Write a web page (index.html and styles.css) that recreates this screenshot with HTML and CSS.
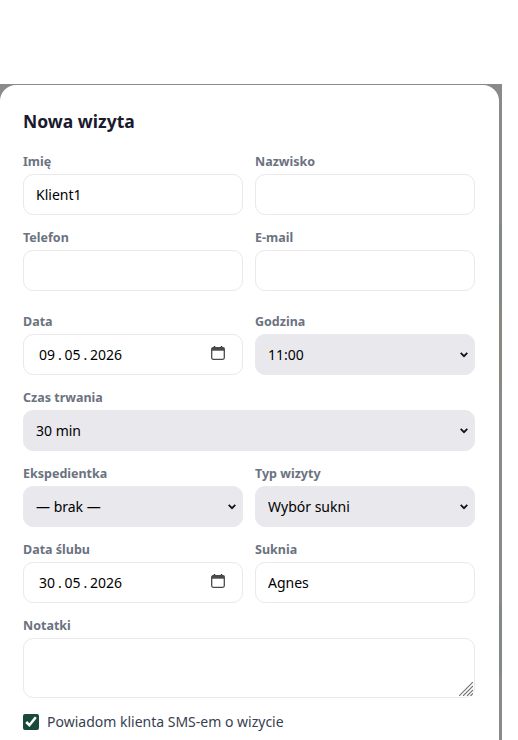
FILE: index.html
```html
<!DOCTYPE html>
<html lang="pl">
<head>
    <meta charset="UTF-8">
    <meta name="viewport" content="width=device-width, initial-scale=1.0">
    <title>Nowa wizyta</title>
    <link rel="stylesheet" href="styles.css">
</head>
<body>
    <div class="overlay">
        <form class="modal">
            <h2 class="modal-title">Nowa wizyta</h2>
            <div class="row">
                <div class="field">
                    <label>Imię</label>
                    <input type="text" value="Klient1">
                </div>
                <div class="field">
                    <label>Nazwisko</label>
                    <input type="text">
                </div>
            </div>
            <div class="row row-contact">
                <div class="field">
                    <label>Telefon</label>
                    <input type="tel">
                </div>
                <div class="field">
                    <label>E-mail</label>
                    <input type="email">
                </div>
            </div>
            <div class="row">
                <div class="field">
                    <label>Data</label>
                    <div class="date-box">
                        <input type="text" class="date-input" value="09 . 05 . 2026">
                        <svg class="date-icon" width="14" height="14" viewBox="0 0 14 14"><path d="M3.5 0v3M10.500 0v3" stroke="#3a3a3a" stroke-width="1.500" fill="none"/><rect x="0.700" y="1.700" width="12.600" height="11.600" rx="1.500" fill="none" stroke="#4a4a4a" stroke-width="1.300"/><rect x="0.700" y="1.700" width="12.600" height="3" fill="#4a4a4a"/></svg>
                    </div>
                </div>
                <div class="field">
                    <label>Godzina</label>
                    <select><option>11:00</option><option>11:30</option></select>
                </div>
            </div>
            <div class="row">
                <div class="field field-wide">
                    <label>Czas trwania</label>
                    <select><option>30 min</option><option>60 min</option></select>
                </div>
            </div>
            <div class="row">
                <div class="field">
                    <label>Ekspedientka</label>
                    <select><option>— brak —</option></select>
                </div>
                <div class="field">
                    <label>Typ wizyty</label>
                    <select><option>Wybór sukni</option></select>
                </div>
            </div>
            <div class="row">
                <div class="field">
                    <label>Data ślubu</label>
                    <div class="date-box">
                        <input type="text" class="date-input" value="30 . 05 . 2026">
                        <svg class="date-icon" width="14" height="14" viewBox="0 0 14 14"><path d="M3.5 0v3M10.500 0v3" stroke="#3a3a3a" stroke-width="1.500" fill="none"/><rect x="0.700" y="1.700" width="12.600" height="11.600" rx="1.500" fill="none" stroke="#4a4a4a" stroke-width="1.300"/><rect x="0.700" y="1.700" width="12.600" height="3" fill="#4a4a4a"/></svg>
                    </div>
                </div>
                <div class="field">
                    <label>Suknia</label>
                    <input type="text" value="Agnes">
                </div>
            </div>
            <div class="row">
                <div class="field field-wide">
                    <label>Notatki</label>
                    <div class="notes-box">
                        <textarea></textarea>
                        <svg class="notes-grip" width="14" height="14" viewBox="0 0 14 14"><path d="M0 14L14 0M4 14L14 4M8 14L14 8M11.500 14L14 11.500" stroke="#777" stroke-width="1.200" fill="none"/></svg>
                    </div>
                </div>
            </div>
            <label class="check">
                <input type="checkbox" checked>
                <span>Powiadom klienta SMS-em o wizycie</span>
            </label>
        </form>
    </div>
</body>
</html>
```

FILE: styles.css
```css
* {
    box-sizing: border-box;
}
html, body {
    height: 100%;
}
body {
    margin: 0;
    background: #fff;
    font-family: 'Noto Sans', sans-serif;
    color: #1a1a2e;
    overflow: hidden;
}
.overlay {
    width: 502px;
    height: 656px;
    margin-top: 84px;
    background: linear-gradient(#8a8a8a 0 139px, #808a86 139px 226px, #8b8880 226px 306px, #8a8a8a 306px 520px, #808a86 520px 590px, #8a8a8a 590px);
    overflow: hidden;
}
.modal {
    width: 499px;
    height: 700px;
    margin-top: 1px;
    background: #fff;
    border-radius: 16px 16px 0 0;
    padding: 24px 24px 0 23px;
}
.modal-title {
    margin: 0 0 19px;
    font-size: 17.500px;
    line-height: 25px;
    font-weight: 700;
}
.row {
    display: grid;
    grid-template-columns: 220px 220px;
    gap: 12px;
    margin-bottom: 14px;
}
.row-contact {
    margin-bottom: 22px;
}
.field-wide {
    grid-column: 1 / 3;
}
.field label {
    display: block;
    font-size: 12.500px;
    line-height: 18px;
    font-weight: 700;
    color: #6b7280;
    margin-bottom: 3px;
}
input[type="text"], input[type="tel"], input[type="email"], select, textarea {
    display: block;
    width: 100%;
    height: 41px;
    padding: 0 12px;
    font-family: 'Noto Sans', sans-serif;
    font-size: 14px;
    color: #000;
    background: #fff;
    border: 1px solid #e8e8ed;
    border-radius: 10px;
    outline: none;
}
select {
    appearance: none;
    background: #e8e8ed url("data:image/svg+xml,%3Csvg xmlns='http://www.w3.org/2000/svg' width='8' height='6'%3E%3Cpath d='M0.700 0.800L4 4.200L7.300 0.800' fill='none' stroke='%23111' stroke-width='1.700'/%3E%3C/svg%3E") no-repeat right 6px center;
}
.date-box, .notes-box {
    position: relative;
}
input.date-input {
    padding-left: 15px;
    word-spacing: -0.750px;
}
.date-icon {
    position: absolute;
    top: 12px;
    right: 18px;
}
textarea {
    height: 60px;
    resize: none;
}
.notes-grip {
    position: absolute;
    right: 2px;
    bottom: 2px;
}
.check {
    display: flex;
    align-items: center;
    gap: 8px;
    font-size: 14px;
    line-height: 20px;
    color: #374151;
}
.check input {
    width: 16px;
    height: 16px;
    margin: 0;
    accent-color: #1a4a3a;
}
```
